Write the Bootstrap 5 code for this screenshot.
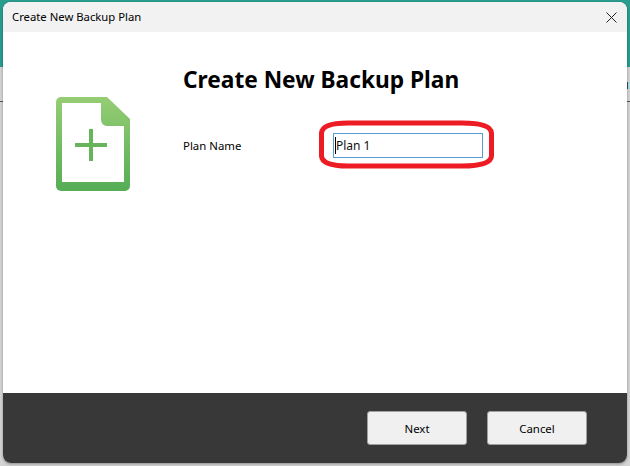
<!DOCTYPE html>
<html lang="en">
<head>
<meta charset="utf-8">
<title>Create New Backup Plan</title>
<link href="https://cdn.jsdelivr.net/npm/bootstrap@5.3.0/dist/css/bootstrap.min.css" rel="stylesheet">
<style>
html,body{width:630px;height:466px;overflow:hidden}
body{position:relative;background:#d4d4d4;font-family:"Noto Sans","Open Sans",sans-serif;color:#000}
.app-band{height:67px;background:#2a9d8f}
.app-rule{height:1px;margin-top:34px;background:#555}
.peek-bit{position:absolute;left:627px;top:82px;width:3px;height:7px;background:#a8e0e8;border-left:1px solid #445}
.dlg{position:absolute;left:3px;top:2px;width:624px;height:461px;border-radius:8px;box-shadow:0 1px 3px rgba(0,0,0,.35);overflow:hidden;background:#fff}
.dlg-title{height:30px;background:#f2f2f2;font-size:11.3px;padding-left:9px;padding-right:10px}
.dlg-body{height:361px}
.side-icon{width:180px;padding-left:53px;padding-top:65px}
.main-h{font-size:22.7px;font-weight:700;line-height:30px;margin:33px 0 0;color:#000}
.form-line{margin-top:38px;height:25px;font-size:11.4px}
.form-lab{width:150px;margin:0}
.plan-wrap{position:relative;width:150px;height:25px}
.plan-in{display:block;width:150px;height:25px;border:1px solid #5b9bd5;border-radius:0;padding:0 2px;font-size:12px;line-height:23px;color:#111;font-family:inherit;outline:0;caret-color:transparent}
.caret-mark{position:absolute;left:2px;top:4px;width:1px;height:17px;background:#000}
.red-ring{position:absolute;left:313px;top:116px}
.dlg-foot{height:70px;background:#383838;padding:18px 40px 18px 0}
.foot-btn{width:100px;height:34px;padding:1px 0 0;font-size:11.4px;background:#f0f0f0;border:1px solid #a0a0a0;border-radius:3px;color:#000}
</style>
</head>
<body>
<div class="app-band"></div>
<div class="app-rule"></div>
<div class="peek-bit"></div>
<div class="dlg d-flex flex-column">
  <div class="dlg-title d-flex align-items-center justify-content-between">
    <span>Create New Backup Plan</span>
    <svg width="11" height="11" viewBox="0 0 11 11" aria-label="Close"><path d="M.5.5l10 10M10.5.5l-10 10" stroke="#222" stroke-width="1" fill="none"/></svg>
  </div>
  <div class="dlg-body d-flex">
    <div class="side-icon">
      <svg width="74" height="94" viewBox="0 0 74 94">
        <defs><linearGradient id="g" x1="0" y1="0" x2="0" y2="1"><stop offset="0" stop-color="#96cd74"/><stop offset="1" stop-color="#55ad55"/></linearGradient></defs>
        <path d="M5 0H51L74 22V89a5 5 0 0 1-5 5H5a5 5 0 0 1-5-5V5a5 5 0 0 1 5-5Z" fill="url(#g)"/>
        <path d="M6 6H45V23a6 6 0 0 0 6 6H68V85H6Z" fill="#fff"/>
        <path d="M19 46H51V50H19ZM33 32H37V64H33Z" fill="#66b55c"/>
      </svg>
    </div>
    <div>
      <h1 class="main-h">Create New Backup Plan</h1>
      <div class="form-line d-flex align-items-center">
        <label class="form-lab" for="plan">Plan Name</label>
        <div class="plan-wrap"><input id="plan" class="plan-in" value="Plan 1"><span class="caret-mark"></span></div>
      </div>
    </div>
    <svg class="red-ring" width="182" height="54" viewBox="0 0 182 54"><path d="M32 5H146C164 5 175 8 175.500 15V38C175 45 164 48 146 48H32C16 48 6 45 5.500 38V15C6 8 16 5 32 5Z" fill="none" stroke="#ed1c24" stroke-width="5"/></svg>
  </div>
  <div class="dlg-foot d-flex justify-content-end gap-3">
    <button type="button" class="btn foot-btn">Next</button>
    <button type="button" class="btn foot-btn ms-1">Cancel</button>
  </div>
</div>
</body>
</html>
